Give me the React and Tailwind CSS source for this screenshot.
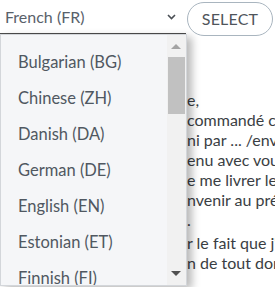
import { useState } from 'react';

const languages = [
  'Bulgarian (BG)',
  'Chinese (ZH)',
  'Danish (DA)',
  'German (DE)',
  'English (EN)',
  'Estonian (ET)',
  'Finnish (FI)',
];

// letter text: the first part of each line sits under the open dropdown
const letter = [
  ['Madame la Directric', 'e,'],
  ["Le 12 mars dernier, j'ai", 'commandé chez vous'],
  ['un produit (référence) four', 'ni par ... /envoyé par ...'],
  ['au prix de 50 €. Il a été conv', 'enu avec vous'],
  ['et que vous étiez tenu d', 'e me livrer le produit'],
  ['avant le 30 mars, ou de co', 'nvenir au préalable'],
  ["d'une autre date de livraison", '.'],
  ['Je proteste vivement su', "r le fait que j'"],
  ['ai subi et je demande réparatio', 'n de tout dommage'],
];

function Chevron() {
  return (
    <svg width="9" height="6" viewBox="0 0 9 6" fill="none">
      <path d="M1 1l3.5 3.5L8 1" stroke="#4a4f55" strokeWidth="1.6" />
    </svg>
  );
}

function LetterLine({ before, after, className = '' }) {
  return (
    <div className={`flex ${className}`}>
      <span className="w-[182px] shrink-0 overflow-hidden text-right">{before}</span>
      <span>{after}</span>
    </div>
  );
}

export default function App() {
  const [lang, setLang] = useState('French (FR)');

  return (
    <div className="relative w-[275px] h-[287px] overflow-hidden bg-white font-[family-name:Lato,sans-serif] text-[16px]">
      <div className="flex items-start">
        <div className="w-[186px] h-[34px] border-b border-[#4d4d4d] flex items-center justify-between pl-[5px] pr-[10px] text-[#59616a]">
          <span>{lang}</span>
          <Chevron />
        </div>
        <button className="ml-[1px] mt-[2px] h-[34px] w-[86px] rounded-full border border-[#a9b5bf] text-[#4f555b] text-[16px] tracking-[0.2px]">
          SELECT
        </button>
      </div>

      <div className="pl-[5px] pt-[54px] text-[#3a3e43] leading-[20px] whitespace-nowrap">
        {letter.map(([before, after], i) => (
          <LetterLine key={i} before={before} after={after} className={i === 7 ? 'mt-[3px]' : ''} />
        ))}
      </div>

      <div className="absolute left-0 top-[34px] w-[187px] h-[252px] bg-[#f5f6f8] border border-[#d3d6da] shadow-[5px_3px_8px_rgba(0,0,0,0.28)] overflow-hidden">
        <ul className="pt-[9px] pr-[19px] text-[#505861] text-[16.5px]">
          {languages.map((l) => (
            <li
              key={l}
              onClick={() => setLang(l)}
              className="h-[36px] flex items-center pl-[17px] cursor-pointer"
            >
              {l}
            </li>
          ))}
        </ul>
        <div className="absolute right-0 top-0 bottom-0 w-[19px] bg-[#f1f1f1]">
          <div className="absolute left-[4px] top-[9px] w-0 h-0 border-l-[5px] border-r-[5px] border-b-[5px] border-l-transparent border-r-transparent border-b-[#a3a3a3]" />
          <div className="absolute left-[1px] right-[1px] top-[22px] h-[57px] bg-[#c1c1c1]" />
          <div className="absolute left-[4px] bottom-[9px] w-0 h-0 border-l-[5px] border-r-[5px] border-t-[5px] border-l-transparent border-r-transparent border-t-[#505050]" />
        </div>
      </div>
    </div>
  );
}
